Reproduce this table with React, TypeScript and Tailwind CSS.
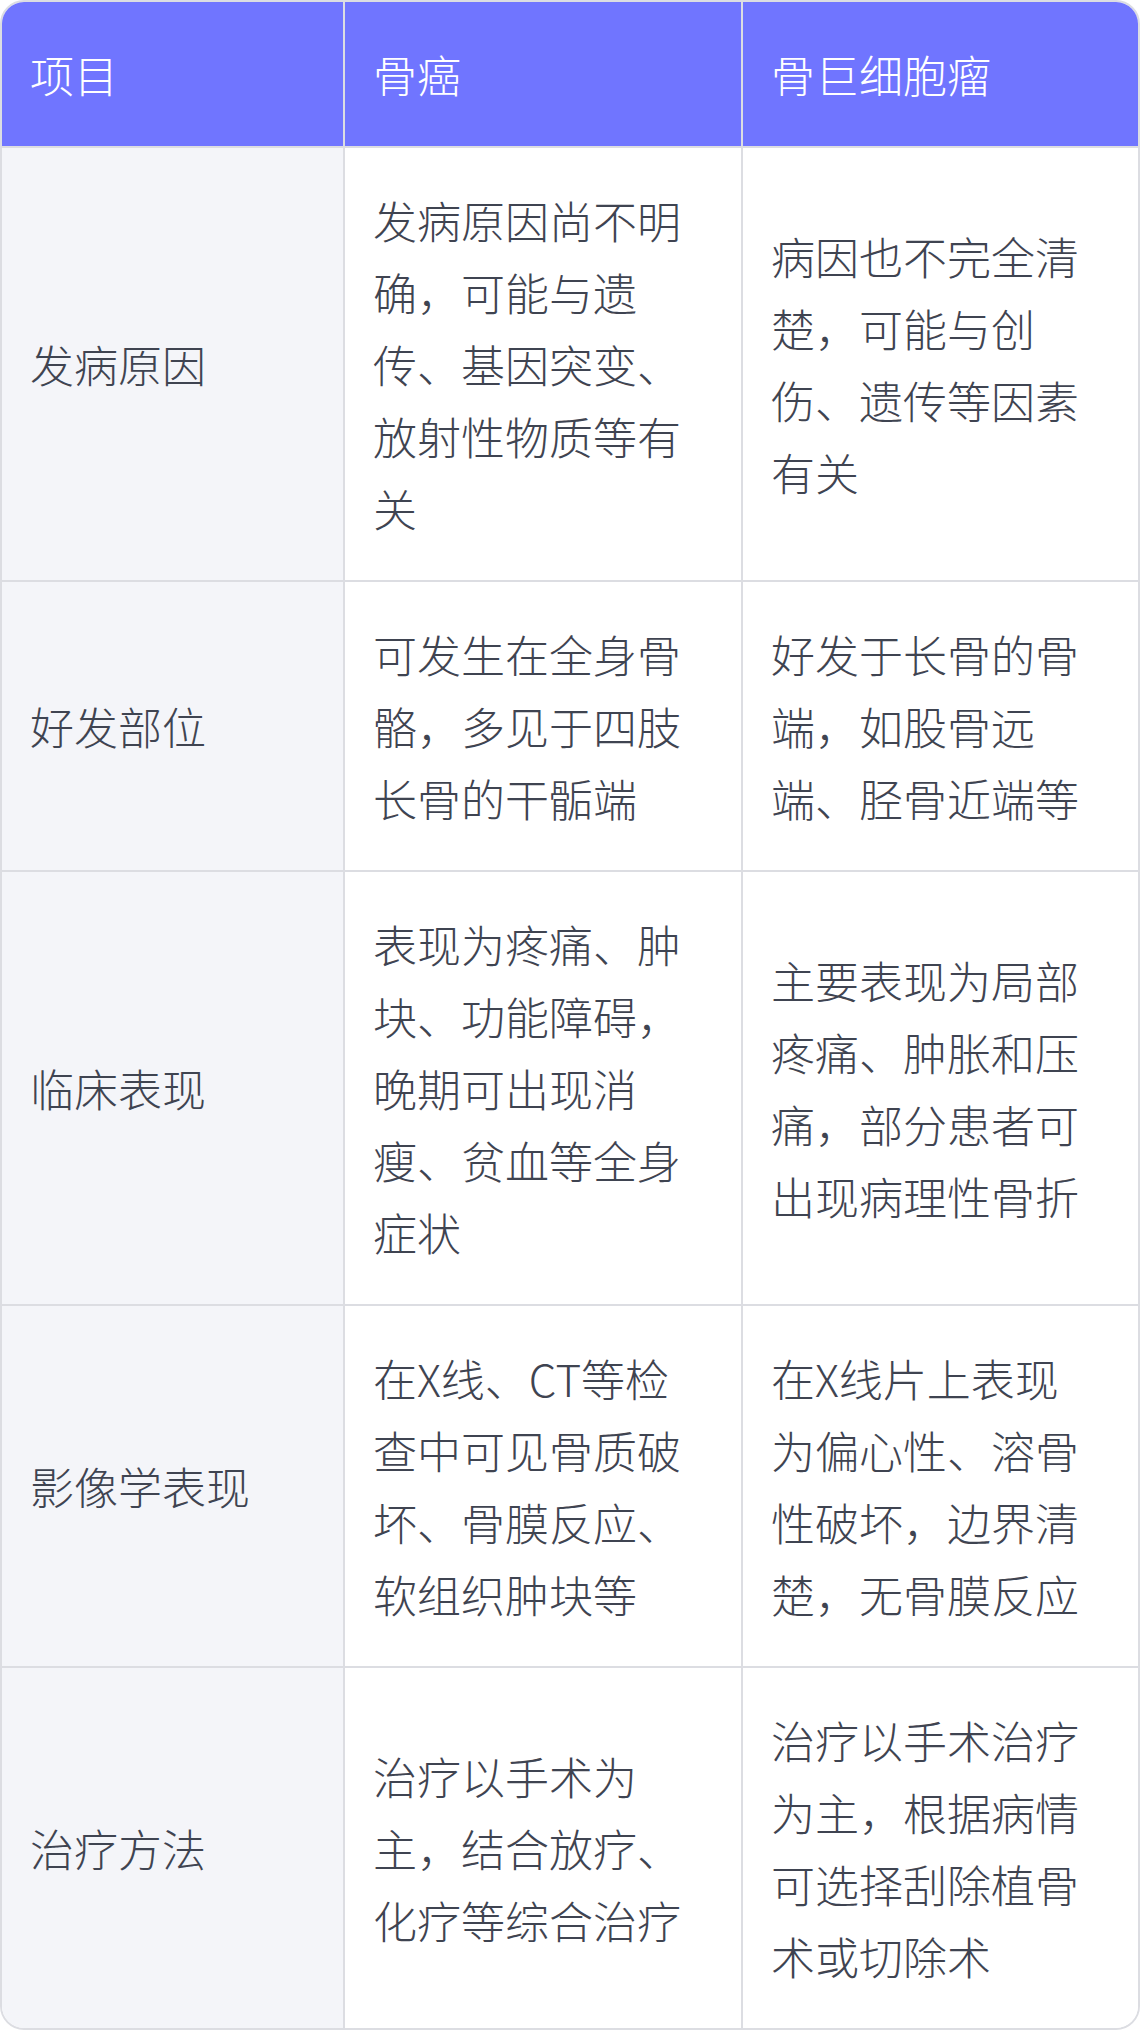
const headers = ["项目", "骨癌", "骨巨细胞瘤"];

const rows: [string, string, string][] = [
  [
    "发病原因",
    "发病原因尚不明确，可能与遗传、基因突变、放射性物质等有关",
    "病因也不完全清楚，可能与创伤、遗传等因素有关",
  ],
  ["好发部位", "可发生在全身骨骼，多见于四肢长骨的干骺端", "好发于长骨的骨端，如股骨远端、胫骨近端等"],
  [
    "临床表现",
    "表现为疼痛、肿块、功能障碍，晚期可出现消瘦、贫血等全身症状",
    "主要表现为局部疼痛、肿胀和压痛，部分患者可出现病理性骨折",
  ],
  [
    "影像学表现",
    "在X线、CT等检查中可见骨质破坏、骨膜反应、软组织肿块等",
    "在X线片上表现为偏心性、溶骨性破坏，边界清楚，无骨膜反应",
  ],
  ["治疗方法", "治疗以手术为主，结合放疗、化疗等综合治疗", "治疗以手术治疗为主，根据病情可选择刮除植骨术或切除术"],
];

export default function App() {
  return (
    <div className="w-[1140px] bg-white font-['Noto_Sans_CJK_SC','Noto_Sans',sans-serif] text-[44px] font-light leading-[72px] text-[#3f4451]">
      <div className="overflow-hidden rounded-[24px] border-2 border-[#dcdde2]">
        <div className="grid grid-cols-[343px_398px_1fr]">
          {headers.map((h, i) => (
            <div
              key={h}
              className={`flex items-center border-b-2 border-[#dcdde2] bg-[#7075ff] py-9 pl-7 text-white ${
                i < 2 ? "border-r-2 pr-7" : "pr-9"
              }`}
            >
              {h}
            </div>
          ))}
          {rows.map((row, r) =>
            row.map((cell, c) => (
              <div
                key={`${r}-${c}`}
                className={`flex items-center border-[#dcdde2] py-9 pl-7 ${c < 2 ? "border-r-2 pr-7" : "pr-9"} ${
                  r < rows.length - 1 ? "border-b-2" : ""
                } ${c === 0 ? "bg-[#f4f5f9]" : "bg-white"}`}
              >
                <span>{cell}</span>
              </div>
            ))
          )}
        </div>
      </div>
    </div>
  );
}
